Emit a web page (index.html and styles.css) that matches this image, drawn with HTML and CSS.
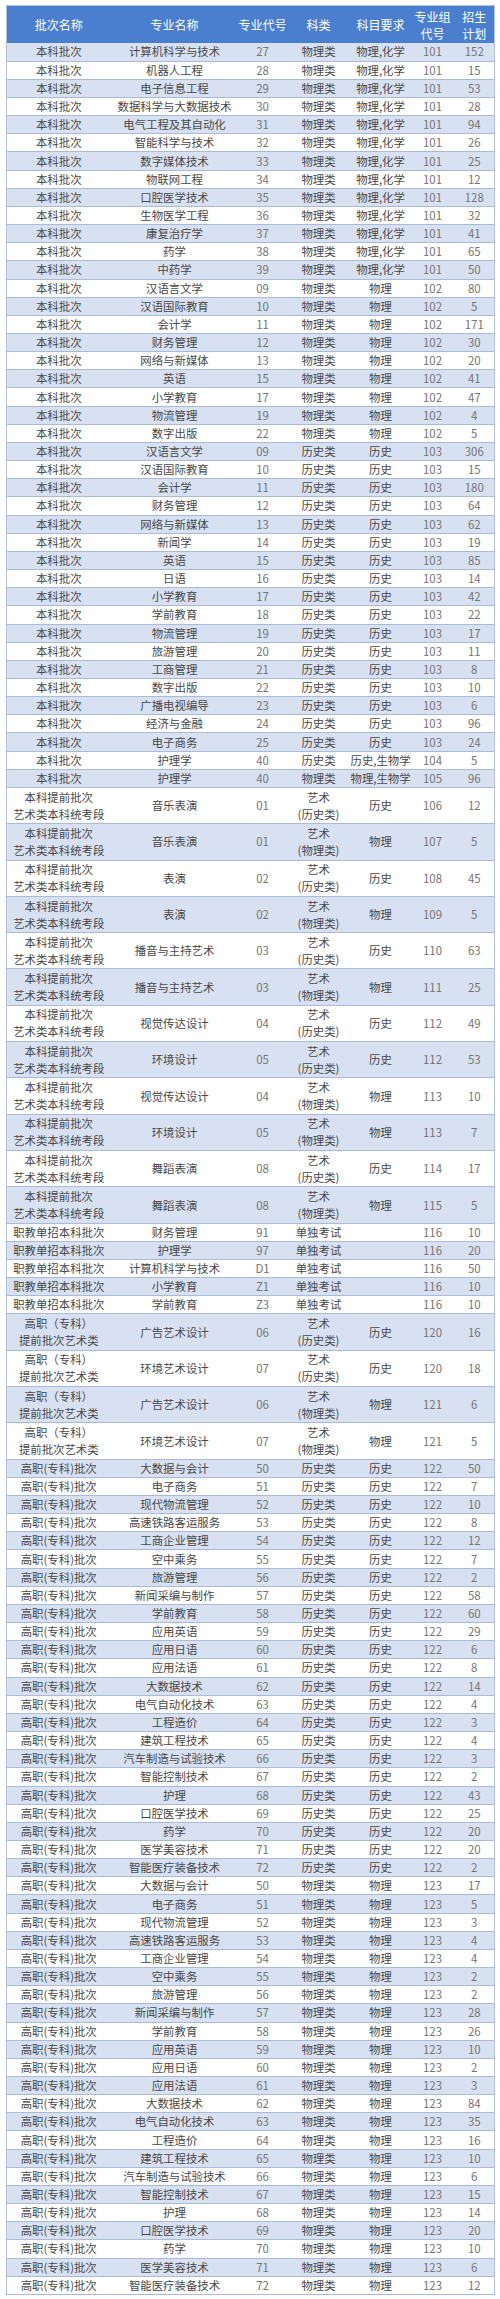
FILE: index.html
```html
<!DOCTYPE html>
<html lang="zh-CN">
<head>
<meta charset="utf-8">
<title>招生计划</title>
<link rel="stylesheet" href="styles.css">
</head>
<body>
<table class="plan">
<colgroup><col class="c1"><col class="c2"><col class="c3"><col class="c4"><col class="c5"><col class="c6"><col class="c7"></colgroup>
<thead>
<tr><th>批次名称</th><th>专业名称</th><th>专业代号</th><th>科类</th><th>科目要求</th><th>专业组<br>代号</th><th>招生<br>计划</th></tr>
</thead>
<tbody>
<tr class="b"><td>本科批次</td><td>计算机科学与技术</td><td>27</td><td>物理类</td><td>物理,化学</td><td>101</td><td>152</td></tr>
<tr><td>本科批次</td><td>机器人工程</td><td>28</td><td>物理类</td><td>物理,化学</td><td>101</td><td>15</td></tr>
<tr class="b"><td>本科批次</td><td>电子信息工程</td><td>29</td><td>物理类</td><td>物理,化学</td><td>101</td><td>53</td></tr>
<tr><td>本科批次</td><td>数据科学与大数据技术</td><td>30</td><td>物理类</td><td>物理,化学</td><td>101</td><td>28</td></tr>
<tr class="b"><td>本科批次</td><td>电气工程及其自动化</td><td>31</td><td>物理类</td><td>物理,化学</td><td>101</td><td>94</td></tr>
<tr><td>本科批次</td><td>智能科学与技术</td><td>32</td><td>物理类</td><td>物理,化学</td><td>101</td><td>26</td></tr>
<tr class="b"><td>本科批次</td><td>数字媒体技术</td><td>33</td><td>物理类</td><td>物理,化学</td><td>101</td><td>25</td></tr>
<tr><td>本科批次</td><td>物联网工程</td><td>34</td><td>物理类</td><td>物理,化学</td><td>101</td><td>12</td></tr>
<tr class="b"><td>本科批次</td><td>口腔医学技术</td><td>35</td><td>物理类</td><td>物理,化学</td><td>101</td><td>128</td></tr>
<tr><td>本科批次</td><td>生物医学工程</td><td>36</td><td>物理类</td><td>物理,化学</td><td>101</td><td>32</td></tr>
<tr class="b"><td>本科批次</td><td>康复治疗学</td><td>37</td><td>物理类</td><td>物理,化学</td><td>101</td><td>41</td></tr>
<tr><td>本科批次</td><td>药学</td><td>38</td><td>物理类</td><td>物理,化学</td><td>101</td><td>65</td></tr>
<tr class="b"><td>本科批次</td><td>中药学</td><td>39</td><td>物理类</td><td>物理,化学</td><td>101</td><td>50</td></tr>
<tr><td>本科批次</td><td>汉语言文学</td><td>09</td><td>物理类</td><td>物理</td><td>102</td><td>80</td></tr>
<tr class="b"><td>本科批次</td><td>汉语国际教育</td><td>10</td><td>物理类</td><td>物理</td><td>102</td><td>5</td></tr>
<tr><td>本科批次</td><td>会计学</td><td>11</td><td>物理类</td><td>物理</td><td>102</td><td>171</td></tr>
<tr class="b"><td>本科批次</td><td>财务管理</td><td>12</td><td>物理类</td><td>物理</td><td>102</td><td>30</td></tr>
<tr><td>本科批次</td><td>网络与新媒体</td><td>13</td><td>物理类</td><td>物理</td><td>102</td><td>20</td></tr>
<tr class="b"><td>本科批次</td><td>英语</td><td>15</td><td>物理类</td><td>物理</td><td>102</td><td>41</td></tr>
<tr><td>本科批次</td><td>小学教育</td><td>17</td><td>物理类</td><td>物理</td><td>102</td><td>47</td></tr>
<tr class="b"><td>本科批次</td><td>物流管理</td><td>19</td><td>物理类</td><td>物理</td><td>102</td><td>4</td></tr>
<tr><td>本科批次</td><td>数字出版</td><td>22</td><td>物理类</td><td>物理</td><td>102</td><td>5</td></tr>
<tr class="b"><td>本科批次</td><td>汉语言文学</td><td>09</td><td>历史类</td><td>历史</td><td>103</td><td>306</td></tr>
<tr><td>本科批次</td><td>汉语国际教育</td><td>10</td><td>历史类</td><td>历史</td><td>103</td><td>15</td></tr>
<tr class="b"><td>本科批次</td><td>会计学</td><td>11</td><td>历史类</td><td>历史</td><td>103</td><td>180</td></tr>
<tr><td>本科批次</td><td>财务管理</td><td>12</td><td>历史类</td><td>历史</td><td>103</td><td>64</td></tr>
<tr class="b"><td>本科批次</td><td>网络与新媒体</td><td>13</td><td>历史类</td><td>历史</td><td>103</td><td>62</td></tr>
<tr><td>本科批次</td><td>新闻学</td><td>14</td><td>历史类</td><td>历史</td><td>103</td><td>19</td></tr>
<tr class="b"><td>本科批次</td><td>英语</td><td>15</td><td>历史类</td><td>历史</td><td>103</td><td>85</td></tr>
<tr><td>本科批次</td><td>日语</td><td>16</td><td>历史类</td><td>历史</td><td>103</td><td>14</td></tr>
<tr class="b"><td>本科批次</td><td>小学教育</td><td>17</td><td>历史类</td><td>历史</td><td>103</td><td>42</td></tr>
<tr><td>本科批次</td><td>学前教育</td><td>18</td><td>历史类</td><td>历史</td><td>103</td><td>22</td></tr>
<tr class="b"><td>本科批次</td><td>物流管理</td><td>19</td><td>历史类</td><td>历史</td><td>103</td><td>17</td></tr>
<tr><td>本科批次</td><td>旅游管理</td><td>20</td><td>历史类</td><td>历史</td><td>103</td><td>11</td></tr>
<tr class="b"><td>本科批次</td><td>工商管理</td><td>21</td><td>历史类</td><td>历史</td><td>103</td><td>8</td></tr>
<tr><td>本科批次</td><td>数字出版</td><td>22</td><td>历史类</td><td>历史</td><td>103</td><td>10</td></tr>
<tr class="b"><td>本科批次</td><td>广播电视编导</td><td>23</td><td>历史类</td><td>历史</td><td>103</td><td>6</td></tr>
<tr><td>本科批次</td><td>经济与金融</td><td>24</td><td>历史类</td><td>历史</td><td>103</td><td>96</td></tr>
<tr class="b"><td>本科批次</td><td>电子商务</td><td>25</td><td>历史类</td><td>历史</td><td>103</td><td>24</td></tr>
<tr><td>本科批次</td><td>护理学</td><td>40</td><td>历史类</td><td>历史,生物学</td><td>104</td><td>5</td></tr>
<tr class="b"><td>本科批次</td><td>护理学</td><td>40</td><td>物理类</td><td>物理,生物学</td><td>105</td><td>96</td></tr>
<tr class="d"><td>本科提前批次<br>艺术类本科统考段</td><td>音乐表演</td><td>01</td><td>艺术<br>(历史类)</td><td>历史</td><td>106</td><td>12</td></tr>
<tr class="d b"><td>本科提前批次<br>艺术类本科统考段</td><td>音乐表演</td><td>01</td><td>艺术<br>(物理类)</td><td>物理</td><td>107</td><td>5</td></tr>
<tr class="d"><td>本科提前批次<br>艺术类本科统考段</td><td>表演</td><td>02</td><td>艺术<br>(历史类)</td><td>历史</td><td>108</td><td>45</td></tr>
<tr class="d b"><td>本科提前批次<br>艺术类本科统考段</td><td>表演</td><td>02</td><td>艺术<br>(物理类)</td><td>物理</td><td>109</td><td>5</td></tr>
<tr class="d"><td>本科提前批次<br>艺术类本科统考段</td><td>播音与主持艺术</td><td>03</td><td>艺术<br>(历史类)</td><td>历史</td><td>110</td><td>63</td></tr>
<tr class="d b"><td>本科提前批次<br>艺术类本科统考段</td><td>播音与主持艺术</td><td>03</td><td>艺术<br>(物理类)</td><td>物理</td><td>111</td><td>25</td></tr>
<tr class="d"><td>本科提前批次<br>艺术类本科统考段</td><td>视觉传达设计</td><td>04</td><td>艺术<br>(历史类)</td><td>历史</td><td>112</td><td>49</td></tr>
<tr class="d b"><td>本科提前批次<br>艺术类本科统考段</td><td>环境设计</td><td>05</td><td>艺术<br>(历史类)</td><td>历史</td><td>112</td><td>53</td></tr>
<tr class="d"><td>本科提前批次<br>艺术类本科统考段</td><td>视觉传达设计</td><td>04</td><td>艺术<br>(物理类)</td><td>物理</td><td>113</td><td>10</td></tr>
<tr class="d b"><td>本科提前批次<br>艺术类本科统考段</td><td>环境设计</td><td>05</td><td>艺术<br>(物理类)</td><td>物理</td><td>113</td><td>7</td></tr>
<tr class="d"><td>本科提前批次<br>艺术类本科统考段</td><td>舞蹈表演</td><td>08</td><td>艺术<br>(历史类)</td><td>历史</td><td>114</td><td>17</td></tr>
<tr class="d b"><td>本科提前批次<br>艺术类本科统考段</td><td>舞蹈表演</td><td>08</td><td>艺术<br>(物理类)</td><td>物理</td><td>115</td><td>5</td></tr>
<tr><td>职教单招本科批次</td><td>财务管理</td><td>91</td><td>单独考试</td><td></td><td>116</td><td>10</td></tr>
<tr class="b"><td>职教单招本科批次</td><td>护理学</td><td>97</td><td>单独考试</td><td></td><td>116</td><td>20</td></tr>
<tr><td>职教单招本科批次</td><td>计算机科学与技术</td><td>D1</td><td>单独考试</td><td></td><td>116</td><td>50</td></tr>
<tr class="b"><td>职教单招本科批次</td><td>小学教育</td><td>Z1</td><td>单独考试</td><td></td><td>116</td><td>10</td></tr>
<tr><td>职教单招本科批次</td><td>学前教育</td><td>Z3</td><td>单独考试</td><td></td><td>116</td><td>10</td></tr>
<tr class="d b"><td>高职（专科）<br>提前批次艺术类</td><td>广告艺术设计</td><td>06</td><td>艺术<br>(历史类)</td><td>历史</td><td>120</td><td>16</td></tr>
<tr class="d"><td>高职（专科）<br>提前批次艺术类</td><td>环境艺术设计</td><td>07</td><td>艺术<br>(历史类)</td><td>历史</td><td>120</td><td>18</td></tr>
<tr class="d b"><td>高职（专科）<br>提前批次艺术类</td><td>广告艺术设计</td><td>06</td><td>艺术<br>(物理类)</td><td>物理</td><td>121</td><td>6</td></tr>
<tr class="d"><td>高职（专科）<br>提前批次艺术类</td><td>环境艺术设计</td><td>07</td><td>艺术<br>(物理类)</td><td>物理</td><td>121</td><td>5</td></tr>
<tr class="b"><td>高职(专科)批次</td><td>大数据与会计</td><td>50</td><td>历史类</td><td>历史</td><td>122</td><td>50</td></tr>
<tr><td>高职(专科)批次</td><td>电子商务</td><td>51</td><td>历史类</td><td>历史</td><td>122</td><td>7</td></tr>
<tr class="b"><td>高职(专科)批次</td><td>现代物流管理</td><td>52</td><td>历史类</td><td>历史</td><td>122</td><td>10</td></tr>
<tr><td>高职(专科)批次</td><td>高速铁路客运服务</td><td>53</td><td>历史类</td><td>历史</td><td>122</td><td>8</td></tr>
<tr class="b"><td>高职(专科)批次</td><td>工商企业管理</td><td>54</td><td>历史类</td><td>历史</td><td>122</td><td>12</td></tr>
<tr><td>高职(专科)批次</td><td>空中乘务</td><td>55</td><td>历史类</td><td>历史</td><td>122</td><td>7</td></tr>
<tr class="b"><td>高职(专科)批次</td><td>旅游管理</td><td>56</td><td>历史类</td><td>历史</td><td>122</td><td>2</td></tr>
<tr><td>高职(专科)批次</td><td>新闻采编与制作</td><td>57</td><td>历史类</td><td>历史</td><td>122</td><td>58</td></tr>
<tr class="b"><td>高职(专科)批次</td><td>学前教育</td><td>58</td><td>历史类</td><td>历史</td><td>122</td><td>60</td></tr>
<tr><td>高职(专科)批次</td><td>应用英语</td><td>59</td><td>历史类</td><td>历史</td><td>122</td><td>29</td></tr>
<tr class="b"><td>高职(专科)批次</td><td>应用日语</td><td>60</td><td>历史类</td><td>历史</td><td>122</td><td>6</td></tr>
<tr><td>高职(专科)批次</td><td>应用法语</td><td>61</td><td>历史类</td><td>历史</td><td>122</td><td>8</td></tr>
<tr class="b"><td>高职(专科)批次</td><td>大数据技术</td><td>62</td><td>历史类</td><td>历史</td><td>122</td><td>14</td></tr>
<tr><td>高职(专科)批次</td><td>电气自动化技术</td><td>63</td><td>历史类</td><td>历史</td><td>122</td><td>4</td></tr>
<tr class="b"><td>高职(专科)批次</td><td>工程造价</td><td>64</td><td>历史类</td><td>历史</td><td>122</td><td>3</td></tr>
<tr><td>高职(专科)批次</td><td>建筑工程技术</td><td>65</td><td>历史类</td><td>历史</td><td>122</td><td>4</td></tr>
<tr class="b"><td>高职(专科)批次</td><td>汽车制造与试验技术</td><td>66</td><td>历史类</td><td>历史</td><td>122</td><td>3</td></tr>
<tr><td>高职(专科)批次</td><td>智能控制技术</td><td>67</td><td>历史类</td><td>历史</td><td>122</td><td>2</td></tr>
<tr class="b"><td>高职(专科)批次</td><td>护理</td><td>68</td><td>历史类</td><td>历史</td><td>122</td><td>43</td></tr>
<tr><td>高职(专科)批次</td><td>口腔医学技术</td><td>69</td><td>历史类</td><td>历史</td><td>122</td><td>25</td></tr>
<tr class="b"><td>高职(专科)批次</td><td>药学</td><td>70</td><td>历史类</td><td>历史</td><td>122</td><td>20</td></tr>
<tr><td>高职(专科)批次</td><td>医学美容技术</td><td>71</td><td>历史类</td><td>历史</td><td>122</td><td>20</td></tr>
<tr class="b"><td>高职(专科)批次</td><td>智能医疗装备技术</td><td>72</td><td>历史类</td><td>历史</td><td>122</td><td>2</td></tr>
<tr><td>高职(专科)批次</td><td>大数据与会计</td><td>50</td><td>物理类</td><td>物理</td><td>123</td><td>17</td></tr>
<tr class="b"><td>高职(专科)批次</td><td>电子商务</td><td>51</td><td>物理类</td><td>物理</td><td>123</td><td>5</td></tr>
<tr><td>高职(专科)批次</td><td>现代物流管理</td><td>52</td><td>物理类</td><td>物理</td><td>123</td><td>3</td></tr>
<tr class="b"><td>高职(专科)批次</td><td>高速铁路客运服务</td><td>53</td><td>物理类</td><td>物理</td><td>123</td><td>4</td></tr>
<tr><td>高职(专科)批次</td><td>工商企业管理</td><td>54</td><td>物理类</td><td>物理</td><td>123</td><td>4</td></tr>
<tr class="b"><td>高职(专科)批次</td><td>空中乘务</td><td>55</td><td>物理类</td><td>物理</td><td>123</td><td>2</td></tr>
<tr><td>高职(专科)批次</td><td>旅游管理</td><td>56</td><td>物理类</td><td>物理</td><td>123</td><td>2</td></tr>
<tr class="b"><td>高职(专科)批次</td><td>新闻采编与制作</td><td>57</td><td>物理类</td><td>物理</td><td>123</td><td>28</td></tr>
<tr><td>高职(专科)批次</td><td>学前教育</td><td>58</td><td>物理类</td><td>物理</td><td>123</td><td>26</td></tr>
<tr class="b"><td>高职(专科)批次</td><td>应用英语</td><td>59</td><td>物理类</td><td>物理</td><td>123</td><td>10</td></tr>
<tr><td>高职(专科)批次</td><td>应用日语</td><td>60</td><td>物理类</td><td>物理</td><td>123</td><td>2</td></tr>
<tr class="b"><td>高职(专科)批次</td><td>应用法语</td><td>61</td><td>物理类</td><td>物理</td><td>123</td><td>3</td></tr>
<tr><td>高职(专科)批次</td><td>大数据技术</td><td>62</td><td>物理类</td><td>物理</td><td>123</td><td>84</td></tr>
<tr class="b"><td>高职(专科)批次</td><td>电气自动化技术</td><td>63</td><td>物理类</td><td>物理</td><td>123</td><td>35</td></tr>
<tr><td>高职(专科)批次</td><td>工程造价</td><td>64</td><td>物理类</td><td>物理</td><td>123</td><td>16</td></tr>
<tr class="b"><td>高职(专科)批次</td><td>建筑工程技术</td><td>65</td><td>物理类</td><td>物理</td><td>123</td><td>10</td></tr>
<tr><td>高职(专科)批次</td><td>汽车制造与试验技术</td><td>66</td><td>物理类</td><td>物理</td><td>123</td><td>6</td></tr>
<tr class="b"><td>高职(专科)批次</td><td>智能控制技术</td><td>67</td><td>物理类</td><td>物理</td><td>123</td><td>15</td></tr>
<tr><td>高职(专科)批次</td><td>护理</td><td>68</td><td>物理类</td><td>物理</td><td>123</td><td>14</td></tr>
<tr class="b"><td>高职(专科)批次</td><td>口腔医学技术</td><td>69</td><td>物理类</td><td>物理</td><td>123</td><td>20</td></tr>
<tr><td>高职(专科)批次</td><td>药学</td><td>70</td><td>物理类</td><td>物理</td><td>123</td><td>10</td></tr>
<tr class="b"><td>高职(专科)批次</td><td>医学美容技术</td><td>71</td><td>物理类</td><td>物理</td><td>123</td><td>6</td></tr>
<tr><td>高职(专科)批次</td><td>智能医疗装备技术</td><td>72</td><td>物理类</td><td>物理</td><td>123</td><td>12</td></tr>
</tbody>
</table>
</body>
</html>
```
FILE: styles.css
```css
html, body {
  margin: 0;
  padding: 0;
  background: #ffffff;
}

body {
  padding: 5px 6px 5px 6px;
  font-family: "Noto Sans CJK SC", "Noto Sans", sans-serif;
}

.plan {
  width: 488px;
  table-layout: fixed;
  border-collapse: collapse;
  border: 1px solid #b3c3df;
}

.c1 { width: 104px; }
.c2 { width: 128px; }
.c3 { width: 48px; }
.c4 { width: 64px; }
.c5 { width: 60px; }
.c6 { width: 44px; }
.c7 { width: 40px; }

.plan th {
  height: 37px;
  padding: 0;
  background: #4a7ecf;
  color: #ffffff;
  font-size: 12px;
  font-weight: 400;
  line-height: 17px;
  text-align: center;
  vertical-align: middle;
  white-space: nowrap;
}

.plan tbody tr {
  height: 18.16px;
  background: #ffffff;
}

.plan tbody tr.b {
  background: #d8e1f2;
}

.plan tbody tr.d {
  height: 36.32px;
}

.plan td {
  padding: 0;
  border-bottom: 1px solid #a9badb;
  color: #484848;
  font-size: 11.4px;
  line-height: 17px;
  text-align: center;
  vertical-align: middle;
  white-space: nowrap;
}

.plan td:nth-child(3),
.plan td:nth-child(6),
.plan td:nth-child(7) {
  color: #747474;
}
```
